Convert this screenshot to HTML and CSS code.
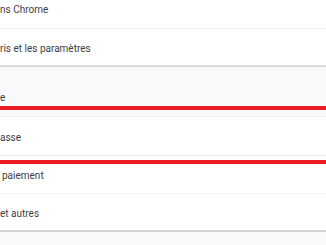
FILE: index.html
```html
<!DOCTYPE html>
<html lang="fr">
<head>
<meta charset="utf-8">
<link rel="stylesheet" href="styles.css">
</head>
<body>
<div class="page">
  <div class="card card-top">
    <div class="row row-first"><span>ns Chrome</span></div>
    <div class="row row-second"><span>ris et les paramètres</span></div>
  </div>
  <div class="heading"><span>e</span></div>
  <div class="card card-bottom">
    <div class="row row-a"><span>asse</span></div>
    <div class="row row-b"><span class="indent">paiement</span></div>
    <div class="row row-c"><span>et autres</span></div>
  </div>
  <div class="mark mark-one"></div>
  <div class="mark mark-two"></div>
</div>
</body>
</html>
```
FILE: styles.css
```css
html, body {
  margin: 0;
  padding: 0;
}
body {
  background: #f8f9fa;
  font-family: Roboto, "Liberation Sans", sans-serif;
  font-size: 10px;
  color: #3c4043;
  width: 326px;
  height: 245px;
  overflow: hidden;
}
.page {
  position: relative;
  width: 326px;
  height: 245px;
}
.card {
  background: #ffffff;
  display: flex;
  flex-direction: column;
}
.card-top {
  border-bottom: 2px solid #d9dadc;
}
.card-bottom {
  border-top: 1px solid #eeeff0;
  border-bottom: 2px solid #d2d3d5;
}
.row {
  display: flex;
  align-items: center;
  line-height: 14px;
}
.row span {
  padding-top: 3px;
}
.row-first {
  height: 28px;
  align-items: flex-start;
  border-bottom: 1px solid #efeff0;
}
.row-first span {
  padding-top: 3px;
}
.row-second {
  height: 36px;
}
.heading {
  height: 49px;
  display: flex;
  align-items: flex-end;
  padding-bottom: 11px;
  box-sizing: border-box;
  line-height: 14px;
  color: #3c4043;
}
.row-a {
  height: 38px;
  border-bottom: 1px solid #f1f1f2;
}
.row-b {
  height: 37px;
  border-bottom: 1px solid #f1f1f2;
}
.row-c {
  height: 36px;
}
.indent {
  padding-left: 2px;
}
.mark {
  position: absolute;
  left: 0;
  width: 326px;
  height: 4px;
  background: #ec1c24;
}
.mark-one {
  top: 106px;
}
.mark-two {
  top: 160px;
}
```
